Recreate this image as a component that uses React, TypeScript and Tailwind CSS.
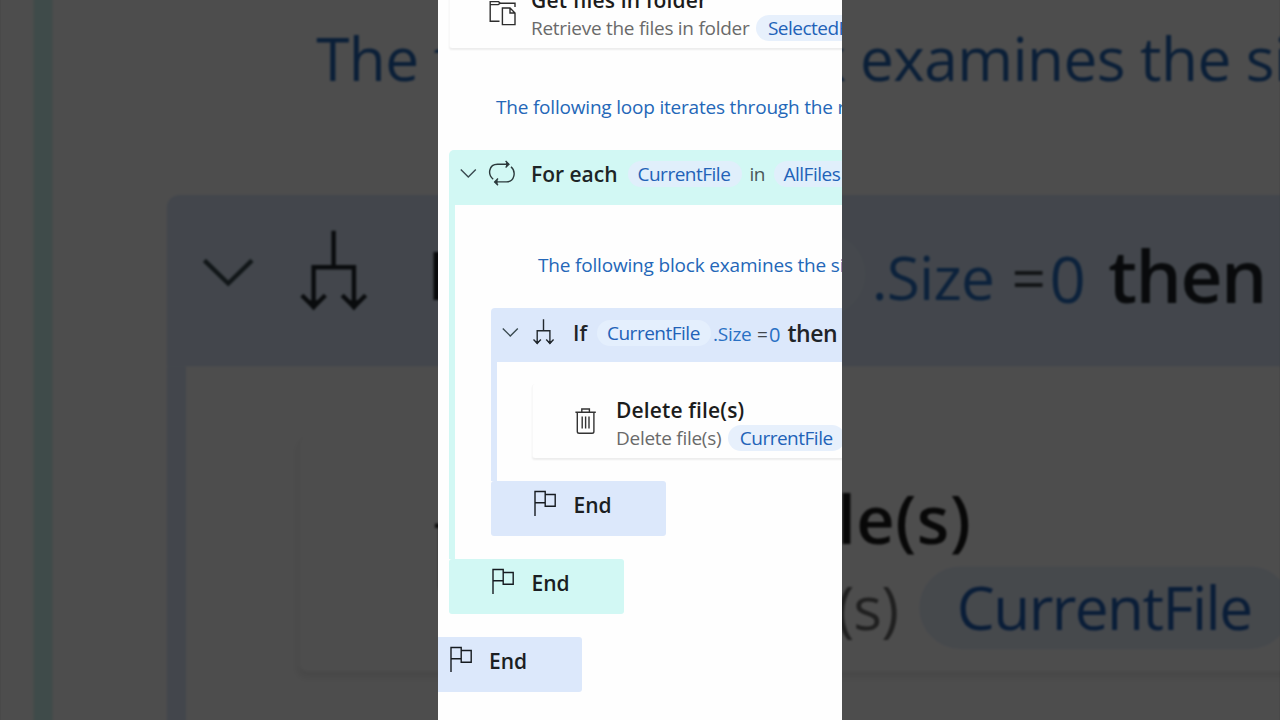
import type { ReactNode } from "react";

interface ChipProps {
  children: ReactNode;
  className?: string;
}

function Chip({ children, className = "" }: ChipProps) {
  return (
    <span className={`flex h-[26px] shrink-0 items-center rounded-full text-[19px] tracking-[-0.5px] text-[#2262b8] ${className}`}>
      {children}
    </span>
  );
}

function ChevronIcon() {
  return (
    <svg className="h-[10px] w-[18px] shrink-0" viewBox="0 0 18 10" fill="none" stroke="#3a4a50" strokeWidth="1.4">
      <path d="M1.8 0.6 L9.3 7.9 L16.8 0.6" />
    </svg>
  );
}

function FilesIcon() {
  return (
    <svg className="mt-[2px] mr-[14px] h-[28px] w-[28px] shrink-0" viewBox="0 0 28 28" fill="none" stroke="#2d2d2d" strokeWidth="1.4">
      <path d="M10.5 22.2 H1.2 V2.6 H9.5 L11.5 4.2 H26 V8 M1.2 5.6 H9.2 L11.4 4.2" />
      <path d="M13.4 9 H21 L26 14 V25.6 H13.4 Z M21 9 V14 H26" />
    </svg>
  );
}

function LoopIcon() {
  return (
    <svg className="h-[26px] w-[28px] shrink-0" viewBox="0 0 28 26" fill="none" stroke="#2c3a3c" strokeWidth="1.4">
      <path d="M5.2 19.2 C-0.7 14.5 0.8 4.3 9.5 4.3 H20.5 M17.6 1 L20.9 4.3 L17.6 7.6" />
      <path d="M23 6.7 C28.3 11.5 26.8 21.9 18.2 21.9 H7 M10 18.6 L6.7 21.9 L10 25.2" />
      <path d="M18 2 V6.6 L21.4 4.3 Z M9.6 19.6 V24.2 L6.2 21.9 Z" fill="#2c3a3c" stroke="none" />
    </svg>
  );
}

function BranchIcon() {
  return (
    <svg className="h-[27px] w-[24px] shrink-0" viewBox="0 0 24 27" fill="none" stroke="#22282e" strokeWidth="1.4">
      <path d="M11.5 0.3 V11.8 M5.2 24 V11.8 H17.9 V24 M1.5 20.6 L5.2 24.3 L8.9 20.6 M14.2 20.6 L17.9 24.3 L21.6 20.6" />
      <path d="M2.7 22.2 H7.7 L5.2 25.4 Z M15.4 22.2 H20.4 L17.9 25.4 Z" fill="#22282e" stroke="none" />
    </svg>
  );
}

function TrashIcon() {
  return (
    <svg className="mr-[19px] mb-[2px] ml-[3px] h-[28px] w-[22px] shrink-0" viewBox="0 0 22 28" fill="none" stroke="#333333" strokeWidth="1.4">
      <path d="M0.4 5.2 H20.8 M6.8 5 V2 H14.4 V5 M2.3 5.2 V24.4 Q2.3 26.2 4.1 26.2 H17.1 Q18.9 26.2 18.9 24.4 V5.2" />
      <path d="M7.2 9.5 V21.5 M10.6 9.5 V21.5 M14 9.5 V21.5" />
    </svg>
  );
}

function FlagIcon() {
  return (
    <svg className="h-[28px] w-[24px] shrink-0" viewBox="0 0 24 28" fill="none" stroke="#161b20" strokeWidth="1.4">
      <path d="M2 26.9 V2.5 H12.2 V13.8 H2 M12.2 5.5 H22.2 V17.2 H12.2 V13" />
    </svg>
  );
}

function EndBlock({ className }: { className: string }) {
  return (
    <div className={`flex h-[55px] w-[175px] shrink-0 items-start rounded-[3px] pl-[42px] ${className}`}>
      <div className="pt-[8px]">
        <FlagIcon />
      </div>
      <span className="ml-[16.5px] pt-[10px] text-[21px] leading-[28px] font-[550] text-[#1b1e22]">End</span>
    </div>
  );
}

interface ActionCardProps {
  icon: ReactNode;
  title: string;
  text: string;
  variable: string;
  className?: string;
}

function ActionCard({ icon, title, text, variable, className = "" }: ActionCardProps) {
  return (
    <div className={`flex h-[74px] w-[600px] shrink-0 rounded-[3px] border-l border-[#f8f8f8] bg-[#fefefe] pl-[39px] shadow-[0_2px_2px_rgba(0,0,0,0.07)] ${className}`}>
      <div className="flex items-center pt-[1px]">{icon}</div>
      <div className="pt-[12px]">
        <div className="text-[21px] leading-[28px] font-[550] tracking-[0.15px] text-[#1c1c1c]">{title}</div>
        <div className="flex h-[28px] items-center text-[19px] tracking-[-0.28px] whitespace-nowrap text-[#6a6a6a]">
          {text}
          <Chip className="ml-[6.5px] bg-[#e7f0fc] px-[12px]">{variable}</Chip>
        </div>
      </div>
    </div>
  );
}

function Flow() {
  return (
    <div className="flex h-[720px] w-[404px] flex-col overflow-hidden bg-[#fefefe] font-['Open_Sans','Noto_Sans',sans-serif] whitespace-nowrap">
      <ActionCard
        icon={<FilesIcon />}
        title="Get files in folder"
        text="Retrieve the files in folder"
        variable="SelectedFolder"
        className="-mt-[26px] ml-[11px]"
      />
      <div className="h-[102px] shrink-0 pt-[45px] pl-[58px] text-[19px] leading-[28px] tracking-[-0.2px] text-[#2467b8]">
        The following loop iterates through the retrieved files
      </div>

      <div className="ml-[11px] flex h-[55px] w-[600px] shrink-0 items-center rounded-t-[5px] bg-[#d2f8f4] pb-[7px] pl-[10px]">
        <ChevronIcon />
        <div className="ml-[11px] pb-[2px]">
          <LoopIcon />
        </div>
        <span className="ml-[15px] w-[96.5px] shrink-0 pt-[2px] text-[21px] font-[550] text-[#1d2526]">For each</span>
        <Chip className="w-[114px] bg-[#e0effb] pl-[10px]">CurrentFile</Chip>
        <span className="ml-[8px] w-[24px] shrink-0 text-[19px] tracking-[-0.5px] text-[#4a5758]">in</span>
        <Chip className="w-[100px] bg-[#e0effb] pl-[10px]">AllFiles</Chip>
      </div>

      <div className="ml-[11px] h-[354px] w-[600px] shrink-0 border-l-[6px] border-[#d2f8f4]">
        <div className="h-[103px] pt-[46px] pl-[83px] text-[19px] leading-[28px] tracking-[-0.18px] text-[#2467b8]">
          The following block examines the size of the file
        </div>
        <div className="ml-[36px] flex h-[54px] items-center rounded-t-[4px] bg-[#dce8fb] pb-[4px] pl-[10px]">
          <ChevronIcon />
          <div className="ml-[13px] pb-[2px]">
            <BranchIcon />
          </div>
          <span className="ml-[17px] w-[24px] shrink-0 pt-[2px] text-[21px] font-[550] text-[#1f2429]">If</span>
          <Chip className="w-[114px] bg-[#e4effd] pl-[10px]">CurrentFile</Chip>
          <span className="ml-[2px] w-[44px] shrink-0 pt-[3px] text-[19px] tracking-[-0.25px] text-[#2970c4]">.Size</span>
          <span className="w-[12px] shrink-0 pt-[3px] text-[19px] text-[#41474d]">=</span>
          <span className="w-[18.5px] shrink-0 pt-[3px] text-[20px] text-[#2970c4]">0</span>
          <span className="text-[23px] font-[550] tracking-[-0.5px] text-[#1f2429]">then</span>
        </div>
        <div className="ml-[36px] h-[119px] border-l-[6px] border-[#dce8fb] pt-[22px] pl-[35px]">
          <ActionCard icon={<TrashIcon />} title="Delete file(s)" text="Delete file(s)" variable="CurrentFile" />
        </div>
        <EndBlock className="ml-[36px] bg-[#dce8fb]" />
      </div>

      <EndBlock className="ml-[11px] bg-[#d2f8f4]" />
      <EndBlock className="mt-[23px] -ml-[31.5px] bg-[#dce8fb]" />
    </div>
  );
}

export default function App() {
  return (
    <div className="relative flex h-[720px] w-[1280px] justify-center overflow-hidden bg-black">
      {/* dimmed enlarged copy behind the portrait frame */}
      <div className="absolute inset-0 flex justify-center opacity-30" aria-hidden="true">
        <div className="scale-[3.175] blur-[0.3px]">
          <Flow />
        </div>
      </div>
      <div className="relative">
        <Flow />
      </div>
    </div>
  );
}
